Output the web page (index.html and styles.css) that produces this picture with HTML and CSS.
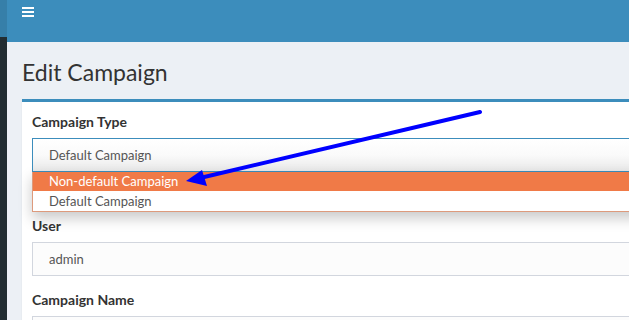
FILE: index.html
```html
<!DOCTYPE html>
<html lang="en">
<head>
  <meta charset="UTF-8">
  <title>Edit Campaign</title>
  <link rel="stylesheet" href="styles.css">
</head>
<body>
  <div class="wrapper">
    <aside class="sidebar">
      <div class="sidebar-logo"></div>
    </aside>

    <div class="main">
      <header class="navbar">
        <span class="menu-toggle">
          <svg width="12" height="10" viewBox="0 0 12 10">
            <rect x="0" y="0" width="12" height="2" fill="#fff"/>
            <rect x="0" y="4" width="12" height="2" fill="#fff"/>
            <rect x="0" y="8" width="12" height="2" fill="#fff"/>
          </svg>
        </span>
      </header>

      <section class="content">
        <h1>Edit Campaign</h1>

        <div class="box">
          <div class="form-group open">
            <label>Campaign Type</label>
            <div class="select focused">Default Campaign</div>
            <ul class="dropdown">
              <li class="selected">Non-default Campaign</li>
              <li>Default Campaign</li>
            </ul>
          </div>
          <div class="form-group">
            <label>User</label>
            <div class="input">admin</div>
          </div>
          <div class="form-group">
            <label>Campaign Name</label>
            <div class="input"></div>
          </div>
        </div>
      </section>
    </div>
  </div>

  <!-- annotation arrow -->
  <svg class="annotation" width="629" height="320" viewBox="0 0 629 320">
    <line x1="480" y1="112" x2="200" y2="178" stroke="#0000ff" stroke-width="4" stroke-linecap="round"/>
    <polygon points="186,181 202,170 207,186" fill="#0000ff"/>
  </svg>
</body>
</html>
```

FILE: styles.css
```css
html, body {
  margin: 0;
  padding: 0;
  height: 100%;
  overflow: hidden;
}

body {
  font-family: Lato, "Open Sans", sans-serif;
  background-color: #ecf0f5;
  color: #333;
}

.wrapper {
  display: flex;
  height: 100%;
}

.sidebar {
  width: 7px;
  flex-shrink: 0;
  background-color: #222d32;
}

.sidebar-logo {
  height: 37px;
  background-color: #367fa9;
}

.main {
  flex: 1;
  min-width: 0;
}

.navbar {
  height: 42px;
  background-color: #3c8dbc;
  display: flex;
  align-items: flex-start;
  padding: 7px 0 0 15px;
  box-sizing: border-box;
}

.menu-toggle svg {
  display: block;
}

.content {
  padding: 0 0 0 15px;
}

h1 {
  margin: 0;
  padding-top: 16px;
  height: 57px;
  box-sizing: border-box;
  font-size: 23px;
  font-weight: normal;
  color: #333;
}

.box {
  width: 700px;
  background: #ffffff;
  border-top: 3px solid #3c8dbc;
  padding: 14px 10px 0 10px;
  box-shadow: 0 1px 1px rgba(0, 0, 0, 0.1);
}

.form-group {
  margin-bottom: 18px;
}

.form-group.open {
  margin-bottom: 8px;
}

label {
  display: block;
  font-size: 14px;
  line-height: 12px;
  font-weight: bold;
  color: #333;
  height: 22px;
}

.select,
.input {
  height: 34px;
  box-sizing: border-box;
  border: 1px solid #d2d6de;
  padding: 8px 16px;
  font-size: 13px;
  color: #555;
  background: #fcfcfc;
}

.select.focused {
  border-color: #3c8dbc;
  background: linear-gradient(#ffffff, #fafafa 50%, #e9e9e9);
}

.dropdown {
  position: relative;
  margin: 0;
  padding: 0;
  list-style: none;
  background: #ffffff;
  border: 1px solid #dd9a7c;
  border-top: none;
  box-shadow: 0 6px 14px rgba(0, 0, 0, 0.22);
}

.dropdown li {
  height: 20px;
  line-height: 20px;
  padding-left: 16px;
  font-size: 13px;
  color: #555;
}

.dropdown li.selected {
  height: 19px;
  line-height: 19px;
  background-color: #f07a47;
  color: #ffffff;
}

.annotation {
  position: absolute;
  top: 0;
  left: 0;
  z-index: 5;
}
```
